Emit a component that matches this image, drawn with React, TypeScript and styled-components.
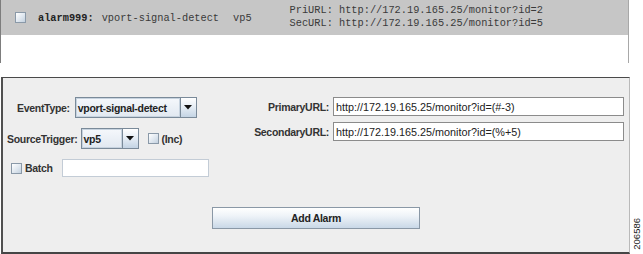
import styled, { createGlobalStyle } from "styled-components";

const GlobalStyle = createGlobalStyle`
  body {
    margin: 0;
    background: #fff;
    font-family: "Liberation Sans", Arial, sans-serif;
  }
`;

const Page = styled.div`
  width: 643px;
  height: 254px;
  overflow: hidden;
`;

const AlarmList = styled.div`
  width: 629px;
  height: 63px;
  box-sizing: border-box;
  border-left: 1px solid #7d7d7d;
  border-right: 1px solid #a8a8a8;
  background: #fff;
`;

const AlarmRow = styled.div`
  height: 35px;
  background: #c6c6c6;
  display: flex;
  align-items: center;
  font-family: "Liberation Mono", "Courier New", monospace;
  font-size: 10.3px;
  color: #333;
`;

const MonoText = styled.span<{ $gap: number; $bold?: boolean }>`
  margin-left: ${(p) => p.$gap}px;
  font-weight: ${(p) => (p.$bold ? 700 : 400)};
  color: ${(p) => (p.$bold ? "#222" : "#3a3a3a")};
  white-space: pre;
  margin-top: 1px;
`;

const UrlBlock = styled.div`
  margin-left: 38px;
  display: flex;
  flex-direction: column;
  line-height: 13px;
  margin-top: -1px;
  white-space: pre;
  color: #3a3a3a;
`;

const CheckBox = styled.span<{ $gap?: number }>`
  display: inline-block;
  flex: none;
  width: 11px;
  height: 11px;
  box-sizing: border-box;
  margin-left: ${(p) => p.$gap ?? 0}px;
  border: 1px solid #8a99a8;
  background: linear-gradient(135deg, #ffffff 0%, #dfe7ef 55%, #c3d1df 100%);
`;

const Panel = styled.div`
  width: 629px;
  height: 177px;
  box-sizing: border-box;
  margin-left: 1px;
  border-top: 1px solid #4a4a4a;
  border-left: 2px solid #505050;
  border-bottom: 2px solid #454545;
  border-right: 1px solid #b9b9b9;
  background: #eeeeee;
  padding-top: 19px;
  display: flex;
  flex-direction: column;
  color: #333;
  font-size: 10.5px;
  letter-spacing: -0.3px;
`;

const Bottom = styled.div`
  display: flex;
  align-items: flex-end;
  margin-top: 14px;
`;

const FigureId = styled.div`
  writing-mode: vertical-rl;
  transform: rotate(180deg);
  font-family: "Liberation Sans", Arial, sans-serif;
  font-size: 9.5px;
  color: #222;
  margin-left: 2px;
  margin-bottom: 4px;
  line-height: 10px;
`;

const Columns = styled.div`
  display: flex;
`;

const LeftCol = styled.div`
  width: 250px;
  display: flex;
  flex-direction: column;
  gap: 10px;
`;

const Row = styled.div<{ $indent: number; $h: number }>`
  display: flex;
  align-items: center;
  height: ${(p) => p.$h}px;
  padding-left: ${(p) => p.$indent}px;
`;

const Label = styled.span<{ $gap?: number }>`
  font-weight: 700;
  white-space: nowrap;
  margin-left: ${(p) => p.$gap ?? 0}px;
`;

const Combo = styled.div<{ $w: number; $gap: number }>`
  display: flex;
  width: ${(p) => p.$w}px;
  height: 21px;
  box-sizing: border-box;
  margin-left: ${(p) => p.$gap}px;
  border: 1px solid #7a8a99;
`;

const ComboValue = styled.div`
  flex: 1;
  display: flex;
  align-items: center;
  padding-left: 1px;
  font-weight: 700;
  color: #222;
  background: linear-gradient(180deg, #f4f7fb 0%, #e2e9f1 100%);
  border: 1px solid #c7d3df;
  white-space: nowrap;
  overflow: hidden;
`;

const ComboArrow = styled.div`
  width: 15px;
  display: flex;
  align-items: center;
  justify-content: center;
  border-left: 1px solid #7a8a99;
  background: linear-gradient(180deg, #ffffff 0%, #e4ecf4 50%, #c4d4e4 100%);
`;

const TextField = styled.div<{ $w: number; $h: number; $gap?: number; $border: string }>`
  width: ${(p) => p.$w}px;
  height: ${(p) => p.$h}px;
  box-sizing: border-box;
  margin-left: ${(p) => p.$gap ?? 0}px;
  border: 1px solid ${(p) => p.$border};
  background: #fff;
  display: flex;
  align-items: center;
  padding-left: 2px;
  color: #222;
  font-size: 10.8px;
  letter-spacing: 0;
  white-space: nowrap;
`;

const UrlGrid = styled.div`
  display: grid;
  grid-template-columns: 76px 291px;
  grid-auto-rows: 19px;
  column-gap: 4px;
  row-gap: 6px;
  align-items: center;
`;

const UrlLabel = styled.span`
  justify-self: end;
  font-weight: 700;
  white-space: nowrap;
`;

const ButtonRow = styled.div`
  display: flex;
  margin-top: 30px;
  padding-left: 209px;
`;

const Button = styled.div`
  width: 208px;
  height: 22px;
  box-sizing: border-box;
  border: 1px solid #8a98a6;
  background: linear-gradient(180deg, #ffffff 0%, #eef3f8 40%, #c9d8e7 100%);
  display: flex;
  align-items: center;
  justify-content: center;
  font-weight: 700;
  color: #222;
`;

function Arrow() {
  return (
    <svg width="8" height="5" viewBox="0 0 8 5">
      <path d="M0 0 H8 L4 4.5 Z" fill="#111" />
    </svg>
  );
}

export default function App() {
  return (
    <Page>
      <GlobalStyle />
      <AlarmList>
        <AlarmRow>
          <CheckBox $gap={14} />
          <MonoText $gap={12} $bold>alarm999:</MonoText>
          <MonoText $gap={8}>vport-signal-detect</MonoText>
          <MonoText $gap={14}>vp5</MonoText>
          <UrlBlock>
            <span>PriURL: http://172.19.165.25/monitor?id=2</span>
            <span>SecURL: http://172.19.165.25/monitor?id=5</span>
          </UrlBlock>
        </AlarmRow>
      </AlarmList>
      <Bottom>
        <Panel>
          <Columns>
            <LeftCol>
              <Row $indent={14} $h={21}>
                <Label>EventType:</Label>
                <Combo $w={122} $gap={5}>
                  <ComboValue>vport-signal-detect</ComboValue>
                  <ComboArrow>
                    <Arrow />
                  </ComboArrow>
                </Combo>
              </Row>
              <Row $indent={4} $h={21}>
                <Label>SourceTrigger:</Label>
                <Combo $w={58} $gap={3}>
                  <ComboValue>vp5</ComboValue>
                  <ComboArrow>
                    <Arrow />
                  </ComboArrow>
                </Combo>
                <CheckBox $gap={9} />
                <Label $gap={3}>(Inc)</Label>
              </Row>
              <Row $indent={8} $h={18}>
                <CheckBox />
                <Label $gap={3}>Batch</Label>
                <TextField $w={147} $h={18} $gap={9} $border="#c3ccd6" />
              </Row>
            </LeftCol>
            <UrlGrid>
              <UrlLabel>PrimaryURL:</UrlLabel>
              <TextField $w={291} $h={19} $border="#8b8b8b">
                http://172.19.165.25/monitor?id=(#-3)
              </TextField>
              <UrlLabel>SecondaryURL:</UrlLabel>
              <TextField $w={291} $h={19} $border="#8b8b8b">
                http://172.19.165.25/monitor?id=(%+5)
              </TextField>
            </UrlGrid>
          </Columns>
          <ButtonRow>
            <Button>Add Alarm</Button>
          </ButtonRow>
        </Panel>
        <FigureId>206586</FigureId>
      </Bottom>
    </Page>
  );
}
